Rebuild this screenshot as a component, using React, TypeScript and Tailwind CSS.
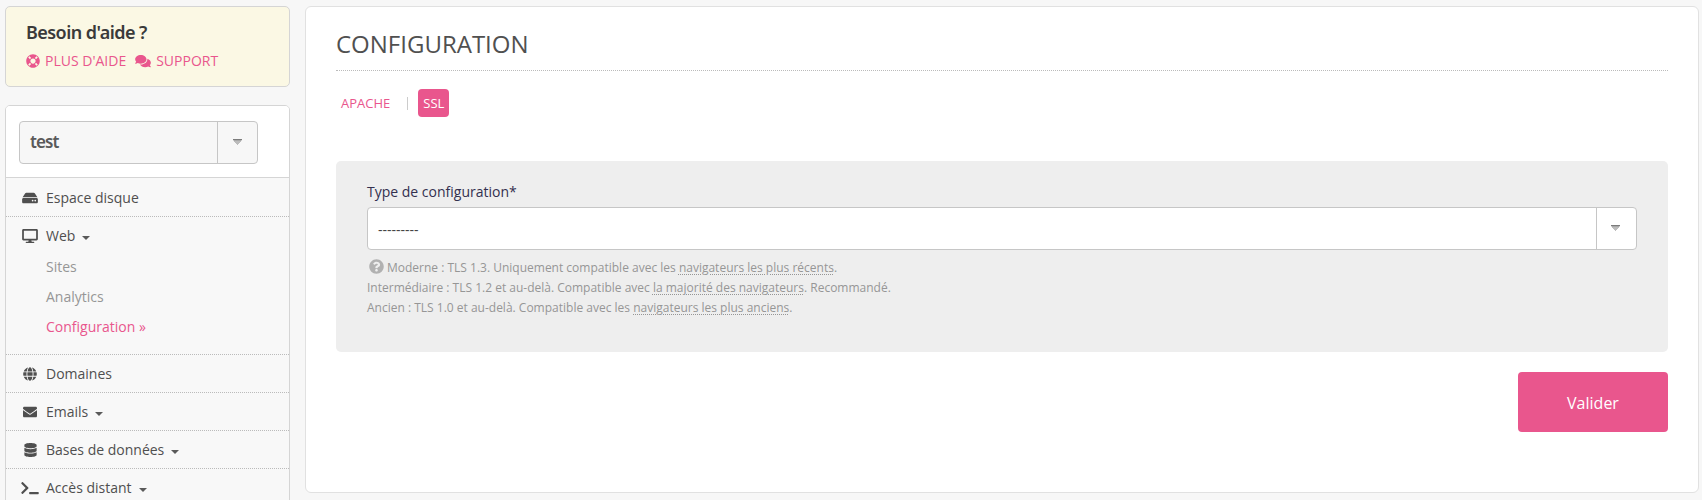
import React from "react";
import {
  FaComments,
  FaDatabase,
  FaDesktop,
  FaEnvelope,
  FaGlobe,
  FaHdd,
  FaLifeRing,
  FaQuestionCircle,
  FaTerminal,
} from "react-icons/fa";
import type { IconType } from "react-icons";

function SelectArrow() {
  return (
    <svg className="-mt-px mr-px" width="9" height="6" viewBox="0 0 9 6">
      <path d="M1 1h7v1H1zM1 2h7v1H1zM2 3h5v1H2zM3 4h3v1H3zM4 5h1v1H4z" fill="#bcbcbc" />
      <path d="M0 0h9v1H0z" fill="#7c7c7c" />
      <path d="M.5 1h8v1h-8z" fill="#a8a8a8" />
    </svg>
  );
}

function NavRow({
  icon: Icon,
  label,
  caret,
  iconClass,
}: {
  icon: IconType;
  label: string;
  caret?: boolean;
  iconClass: string;
}) {
  return (
    <a className="flex h-[37px] items-center pl-[15px] text-[#4f4f4f]">
      <span className="flex w-[18px] shrink-0 justify-center">
        <Icon className={iconClass} />
      </span>
      <span className="ml-[7px]">{label}</span>
      {caret && (
        <svg className="ml-[7px] mt-[4px]" width="8" height="4" viewBox="0 0 8 4">
          <path d="M0 0h8L4 4z" fill="#5a5a5a" />
        </svg>
      )}
    </a>
  );
}

function HelpLink({ children }: { children: React.ReactNode }) {
  return (
    <a className="underline decoration-dotted decoration-1 underline-offset-2">
      {children}
    </a>
  );
}

export default function App() {
  return (
    <div className="flex h-[500px] w-[1702px] items-start overflow-hidden bg-[#f7f7f7] pl-[5px] pt-[6px] font-['Open_Sans',sans-serif] text-[14px] leading-[20px]">
      <aside className="w-[285px] shrink-0">
        <section className="h-[81px] rounded-[5px] border border-[#d5d5d5] bg-[#fbf8e4] pl-[20px] pt-[13px]">
          <h2 className="font-['Noto_Sans',sans-serif] text-[18px] font-semibold leading-[24px] tracking-[-0.55px] text-[#3a3a3a]">
            Besoin d'aide ?
          </h2>
          <div className="mt-[7px] flex items-center text-[#e9568d]">
            <FaLifeRing className="h-[14px] w-[14px]" />
            <span className="ml-[5px]">PLUS D'AIDE</span>
            <FaComments className="ml-[9px] h-[14px] w-[16px]" />
            <span className="ml-[5px]">SUPPORT</span>
          </div>
        </section>

        <nav className="mt-[18px] h-[420px] rounded-t-[5px] border border-[#d5d5d5] bg-[#f8f8f8]">
          <div className="h-[71px] rounded-t-[4px] bg-white pl-[13px] pt-[15px]">
            <div className="flex h-[43px] w-[239px] rounded-[4px] border border-[#c6c6c6] bg-[#f7f7f7]">
              <div className="flex flex-1 items-center pl-[10px] font-['Noto_Sans',sans-serif] text-[17px] font-semibold tracking-[-0.9px] text-[#5a5a5a]">
                <span className="-mt-px">test</span>
              </div>
              <div className="flex w-[40px] items-center justify-center border-l border-[#c6c6c6]">
                <SelectArrow />
              </div>
            </div>
          </div>
          <div className="border-t border-[#d5d5d5] bg-[#f8f8f8]">
            <div className="border-b border-dotted border-[#bbb] pt-px">
              <NavRow icon={FaHdd} label="Espace disque" iconClass="h-[14px] w-[16px]" />
            </div>
            <div className="h-[138px] border-b border-dotted border-[#bbb]">
              <NavRow icon={FaDesktop} label="Web" caret iconClass="h-[14px] w-[16px]" />
              <ul className="pl-[40px] leading-[30px] text-[#969696]">
                <li className="-mt-[2px]">Sites</li>
                <li>Analytics</li>
                <li className="text-[#e9568d]">Configuration »</li>
              </ul>
            </div>
            <div className="border-b border-dotted border-[#bbb]">
              <NavRow icon={FaGlobe} label="Domaines" iconClass="h-[14px] w-[14px]" />
            </div>
            <div className="border-b border-dotted border-[#bbb]">
              <NavRow icon={FaEnvelope} label="Emails" caret iconClass="h-[14px] w-[14px]" />
            </div>
            <div className="border-b border-dotted border-[#bbb]">
              <NavRow icon={FaDatabase} label="Bases de données" caret iconClass="h-[14px] w-[13px]" />
            </div>
            <NavRow icon={FaTerminal} label="Accès distant" caret iconClass="h-[14px] w-[18px]" />
          </div>
        </nav>
      </aside>

      <main className="ml-[15px] flex h-[487px] w-[1394px] shrink-0 flex-col rounded-[6px] border border-[#e1e1e1] bg-white px-[30px]">
        <h1 className="h-[64px] border-b border-dotted border-[#bbb] pt-[20px] text-[24px] leading-[33px] text-[#505050]">
          CONFIGURATION
        </h1>
        <div className="mt-[18px] flex h-[28px] items-center text-[13px]">
          <a className="px-[5px] text-[#e9568d]">APACHE</a>
          <span className="ml-[12px] mt-px h-[13px] w-px bg-[#ccc]" />
          <a className="ml-[10px] flex h-[28px] items-center rounded-[4px] bg-[#e9568d] px-[5px] text-white">SSL</a>
        </div>
        <section className="mt-[44px] h-[191px] rounded-[5px] bg-[#eee] px-[31px] pt-[21px]">
          <label className="block leading-[20px] text-[#33304f]">Type de configuration*</label>
          <div className="mt-[5px] flex h-[43px] w-[1270px] rounded-[4px] border border-[#c6c6c6] bg-white">
            <div className="flex flex-1 items-center pl-[10px] pt-[2px] text-[#444]">---------</div>
            <div className="flex w-[40px] items-center justify-center border-l border-[#c6c6c6] pb-px pr-px">
              <SelectArrow />
            </div>
          </div>
          <div className="mt-[8px] text-[12px] leading-[20px] text-[#969696]">
            <div className="flex">
              <FaQuestionCircle className="ml-[2px] mr-[3px] mt-px h-[15px] w-[15px] text-[#b1b1b1]" />
              <p>
                Moderne : TLS 1.3. Uniquement compatible avec les <HelpLink>navigateurs les plus récents</HelpLink>.
              </p>
            </div>
            <p>
              Intermédiaire : TLS 1.2 et au-delà. Compatible avec <HelpLink>la majorité des navigateurs</HelpLink>. Recommandé.
            </p>
            <p>
              Ancien : TLS 1.0 et au-delà. Compatible avec les <HelpLink>navigateurs les plus anciens</HelpLink>.
            </p>
          </div>
        </section>
        <button className="mt-[20px] h-[60px] w-[150px] self-end rounded-[4px] bg-[#e9568d] pt-[2px] text-[16px] text-white">
          Valider
        </button>
      </main>
    </div>
  );
}
